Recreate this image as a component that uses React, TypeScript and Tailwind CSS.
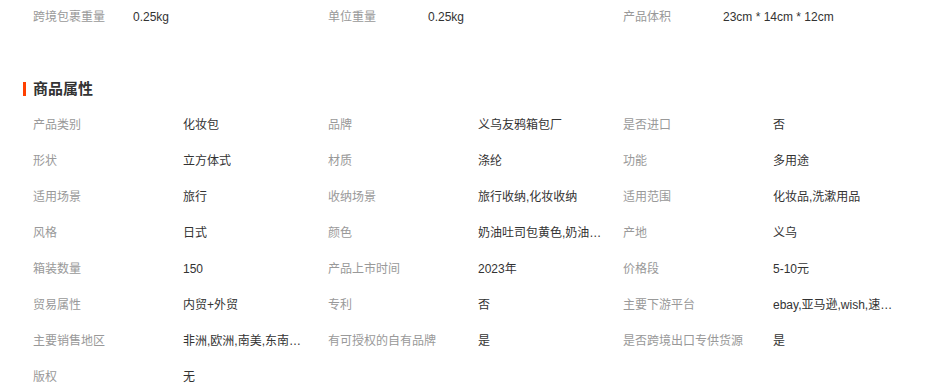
import React from "react";

const top = [
  ["跨境包裹重量", "0.25kg"],
  ["单位重量", "0.25kg"],
  ["产品体积", "23cm * 14cm * 12cm"],
];

const attrs: [string, string][] = [
  ["产品类别", "化妆包"],
  ["品牌", "义乌友鸦箱包厂"],
  ["是否进口", "否"],
  ["形状", "立方体式"],
  ["材质", "涤纶"],
  ["功能", "多用途"],
  ["适用场景", "旅行"],
  ["收纳场景", "旅行收纳,化妆收纳"],
  ["适用范围", "化妆品,洗漱用品"],
  ["风格", "日式"],
  ["颜色", "奶油吐司包黄色,奶油吐司包粉色,奶油吐司包蓝色"],
  ["产地", "义乌"],
  ["箱装数量", "150"],
  ["产品上市时间", "2023年"],
  ["价格段", "5-10元"],
  ["贸易属性", "内贸+外贸"],
  ["专利", "否"],
  ["主要下游平台", "ebay,亚马逊,wish,速卖通"],
  ["主要销售地区", "非洲,欧洲,南美,东南亚,北美"],
  ["有可授权的自有品牌", "是"],
  ["是否跨境出口专供货源", "是"],
  ["版权", "无"],
];

export default function App() {
  return (
    <div
      className="w-[938px] h-[387px] bg-white overflow-hidden text-[12px]"
      style={{ fontFamily: '"Liberation Sans", "Noto Sans CJK SC", sans-serif' }}
    >
      <div className="flex pl-[33px] h-[34px] leading-[34px]">
        {top.map(([k, v]) => (
          <div key={k} className="flex w-[295px]">
            <div className="w-[100px] text-[#999]">{k}</div>
            <div className="text-[#333]">{v}</div>
          </div>
        ))}
      </div>
      <div className="mt-[45px] flex items-center h-[20px] pl-[23px]">
        <div className="w-[3px] h-[14px] bg-[#ff4000]" />
        <div className="ml-[7px] text-[15px] font-bold text-[#333] leading-[20px]">商品属性</div>
      </div>
      <div className="mt-[8px] pl-[33px] grid grid-cols-[295px_295px_295px]">
        {attrs.map(([k, v]) => (
          <div key={k} className="flex h-[36px] leading-[36px]">
            <div className="w-[150px] text-[#999] whitespace-nowrap">{k}</div>
            <div className="max-w-[128px] text-[#333] whitespace-nowrap overflow-hidden text-ellipsis">{v}</div>
          </div>
        ))}
      </div>
    </div>
  );
}
